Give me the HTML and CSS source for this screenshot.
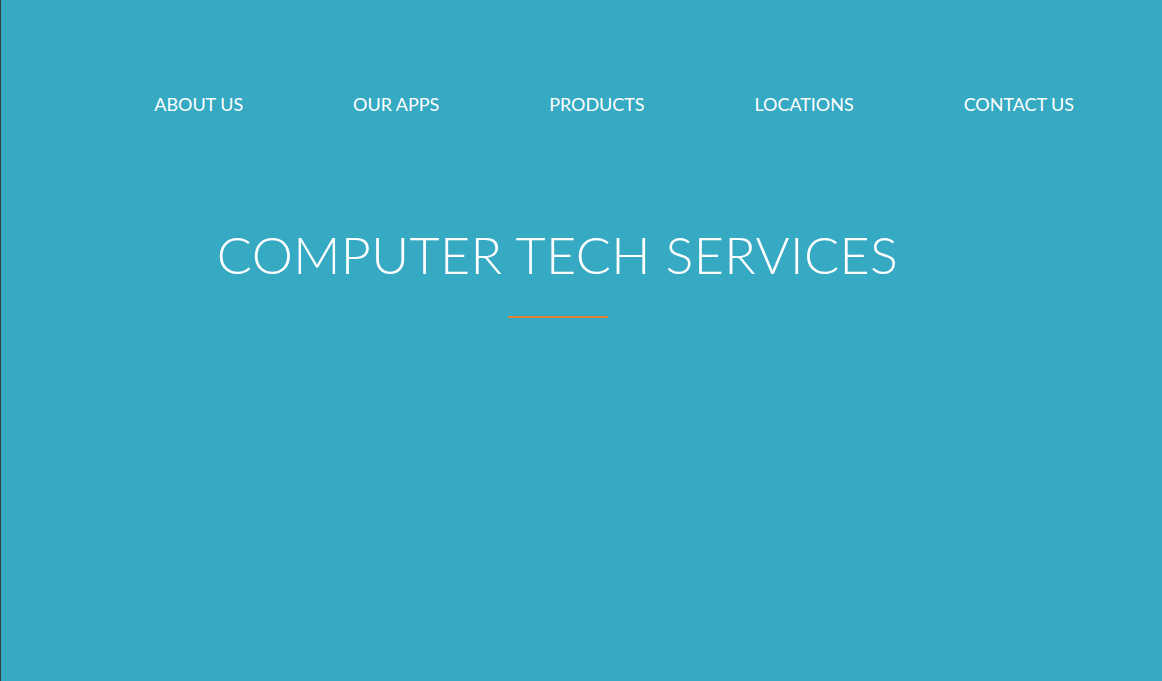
FILE: index.html
```html
<!DOCTYPE html>
<html lang="en">
<head>
<meta charset="utf-8">
<title>Computer Tech Services</title>
<link rel="stylesheet" href="styles.css">
</head>
<body>
<div class="page">
  <header class="topbar">
    <nav class="nav">
      <a class="nav-link" href="#">ABOUT US</a>
      <a class="nav-link" href="#">OUR APPS</a>
      <a class="nav-link" href="#">PRODUCTS</a>
      <a class="nav-link" href="#">LOCATIONS</a>
      <a class="nav-link" href="#">CONTACT US</a>
    </nav>
  </header>
  <section class="hero">
    <h1 class="hero-title">COMPUTER TECH SERVICES</h1>
    <div class="hero-rule"></div>
  </section>
</div>
</body>
</html>
```

FILE: styles.css
```css
html, body {
  margin: 0;
  padding: 0;
  height: 100%;
}
body {
  background: #36a9c3;
  font-family: Lato, "Open Sans", sans-serif;
  color: #ffffff;
  border-left: 1px solid #3a3f44;
  box-sizing: border-box;
  overflow: hidden;
}
.page {
  min-height: 100%;
}
.topbar {
  padding-top: 92px;
  padding-right: 88px;
}
.nav {
  display: flex;
  justify-content: flex-end;
  gap: 110px;
}
.nav-link {
  color: #ffffff;
  text-decoration: none;
  font-size: 18px;
  line-height: 24px;
  font-weight: 400;
  letter-spacing: -0.05px;
}
.hero {
  display: flex;
  flex-direction: column;
  align-items: center;
  padding-right: 48px;
  padding-top: 108px;
}
.hero-title {
  margin: 0;
  font-size: 52px;
  line-height: 60px;
  font-weight: 300;
  letter-spacing: 0.4px;
}
.hero-rule {
  width: 100px;
  height: 2px;
  background: #e0812f;
  margin-top: 32px;
}
```
